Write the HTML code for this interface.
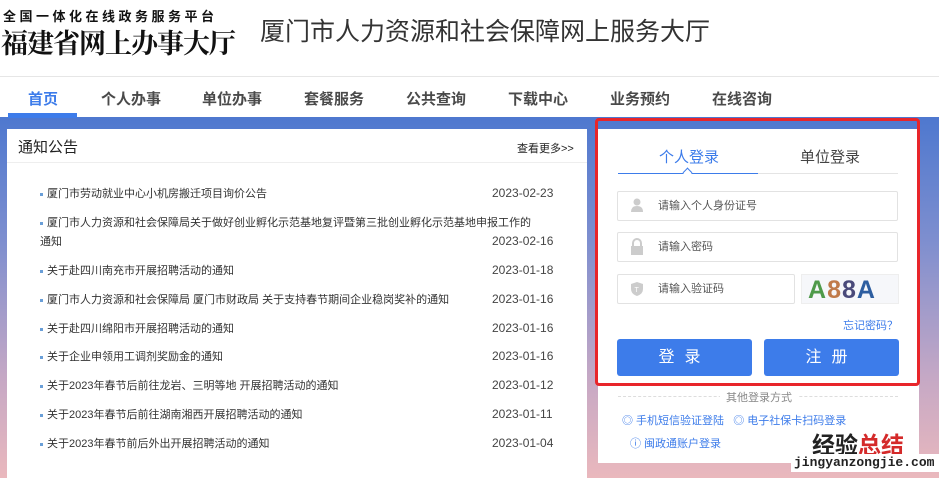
<!DOCTYPE html>
<html><head><meta charset="utf-8"><style>
*{margin:0;padding:0;box-sizing:border-box}
body{width:939px;height:478px;overflow:hidden;background:#fff;font-family:"Liberation Sans","Noto Sans CJK SC",sans-serif;position:relative;color:#333}
.abs{position:absolute}
.bg{left:0;top:117px;width:939px;height:361px;background:linear-gradient(180deg,#4e78cf 0%,#7f8fcf 35%,#c5a8c5 72%,#eab8bd 100%)}
.nav span{position:absolute;top:88px;font-size:15px;font-weight:bold;color:#4a4a4a}
.list div{position:absolute;left:40px;font-size:11px;color:#333;white-space:nowrap;line-height:14px}
.list div b{display:inline-block;width:3px;height:3px;background:#6a9fd8;margin-right:4px;vertical-align:middle}
.list i{position:absolute;left:452px;top:-1px;font-style:normal;font-size:12px;color:#444}
.inp{position:absolute;left:617px;height:30px;border:1px solid #e2e2e2;border-radius:2px;font-size:11px;color:#555;padding-left:40px;line-height:28px;background:#fff}
.btn{position:absolute;top:339px;width:135px;height:37px;background:#3d7cea;border-radius:3px;color:#fff;font-size:16px;text-align:center;line-height:37px;letter-spacing:10px}
</style></head><body>
<div class="abs" style="left:3px;top:6px;font-size:13px;font-weight:bold;letter-spacing:3.5px;color:#111">全国一体化在线政务服务平台</div>
<div class="abs" style="left:1px;top:22px;font-family:'Noto Serif CJK SC',serif;font-size:27px;font-weight:bold;color:#111;letter-spacing:-1px">福建省网上办事大厅</div>
<div class="abs" style="left:260px;top:12px;font-size:25px;color:#333">厦门市人力资源和社会保障网上服务大厅</div>
<div class="abs" style="left:0;top:76px;width:939px;height:1px;background:#e6e6e6"></div>
<div class="nav">
<span style="left:28px;color:#3d7cea">首页</span><span style="left:101px">个人办事</span><span style="left:202px">单位办事</span><span style="left:304px">套餐服务</span><span style="left:406px">公共查询</span><span style="left:508px">下载中心</span><span style="left:610px">业务预约</span><span style="left:712px">在线咨询</span>
</div>
<div class="bg abs"></div>
<div class="abs" style="left:8px;top:113px;width:69px;height:5px;background:#3d7cea"></div>
<div class="abs" style="left:7px;top:129px;width:580px;height:349px;background:#fff"></div>
<div class="abs" style="left:7px;top:162px;width:580px;height:1px;background:#eee"></div>
<div class="abs" style="left:18px;top:136px;font-size:15px;color:#222">通知公告</div>
<div class="abs" style="left:517px;top:140px;font-size:11px;color:#222">查看更多&gt;&gt;</div>
<div class="list">
<div style="top:187px"><b></b>厦门市劳动就业中心小机房搬迁项目询价公告<i>2023-02-23</i></div>
<div style="top:216px"><b></b>厦门市人力资源和社会保障局关于做好创业孵化示范基地复评暨第三批创业孵化示范基地申报工作的</div>
<div style="top:235px">通知<i>2023-02-16</i></div>
<div style="top:264px"><b></b>关于赴四川南充市开展招聘活动的通知<i>2023-01-18</i></div>
<div style="top:293px"><b></b>厦门市人力资源和社会保障局 厦门市财政局 关于支持春节期间企业稳岗奖补的通知<i>2023-01-16</i></div>
<div style="top:322px"><b></b>关于赴四川绵阳市开展招聘活动的通知<i>2023-01-16</i></div>
<div style="top:350px"><b></b>关于企业申领用工调剂奖励金的通知<i>2023-01-16</i></div>
<div style="top:379px"><b></b>关于2023年春节后前往龙岩、三明等地 开展招聘活动的通知<i>2023-01-12</i></div>
<div style="top:408px"><b></b>关于2023年春节后前往湖南湘西开展招聘活动的通知<i>2023-01-11</i></div>
<div style="top:437px"><b></b>关于2023年春节前后外出开展招聘活动的通知<i>2023-01-04</i></div>
</div>
<div class="abs" style="left:598px;top:129px;width:321px;height:334px;background:#fff"></div>
<div class="abs" style="left:595px;top:118px;width:325px;height:268px;border:3px solid #e8252a;border-radius:4px"></div>
<div class="abs" style="left:659px;top:146px;font-size:15px;color:#3d7cea">个人登录</div>
<div class="abs" style="left:800px;top:146px;font-size:15px;color:#444">单位登录</div>
<div class="abs" style="left:618px;top:173px;width:280px;height:1px;background:#e4e4e4"></div>
<div class="abs" style="left:618px;top:173px;width:140px;height:1px;background:#3d7cea"></div>
<div class="abs" style="left:684px;top:169px;width:7px;height:7px;border-left:1px solid #3d7cea;border-top:1px solid #3d7cea;transform:rotate(45deg);background:#fff"></div>
<div class="inp" style="top:191px;width:281px">请输入个人身份证号</div>
<div class="inp" style="top:232px;width:281px">请输入密码</div>
<div class="inp" style="top:274px;width:178px">请输入验证码</div>
<svg class="abs" style="left:629px;top:197px" width="16" height="16"><circle cx="8" cy="5" r="3.5" fill="#ccc"/><path d="M2 15q0-6 6-6t6 6z" fill="#ccc"/></svg>
<svg class="abs" style="left:629px;top:238px" width="16" height="18"><path d="M4 8V5a4 4 0 0 1 8 0v3" stroke="#ccc" stroke-width="2" fill="none"/><rect x="2" y="8" width="12" height="9" fill="#ccc"/></svg>
<svg class="abs" style="left:629px;top:281px" width="16" height="16"><path d="M8 1l6 2v5q0 5-6 7-6-2-6-7V3z" fill="#ccc"/><text x="5.5" y="11" font-size="7" fill="#fff">T</text></svg>
<div class="abs" style="left:801px;top:274px;width:98px;height:30px;background:#f6f7fa;border:1px solid #eee;font-size:25px;font-weight:bold;line-height:30px;padding-left:6px;letter-spacing:1px"><span style="color:#4f9a4a">A</span><span style="color:#c07a4a">8</span><span style="color:#4a4a7a">8</span><span style="color:#2e5ea0">A</span></div>
<div class="abs" style="left:843px;top:317px;font-size:11px;color:#3d7cea">忘记密码？</div>
<div class="btn" style="left:617px">登录</div>
<div class="btn" style="left:764px">注册</div>
<div class="abs" style="left:618px;top:396px;width:280px;border-top:1px dashed #ddd"></div>
<div class="abs" style="left:720px;top:389px;padding:0 6px;background:#fff;font-size:11px;color:#888">其他登录方式</div>
<div class="abs" style="left:622px;top:412px;font-size:11px;color:#3d7cea">◎ 手机短信验证登陆 &nbsp; ◎ 电子社保卡扫码登录</div>
<div class="abs" style="left:630px;top:435px;font-size:11px;color:#3d7cea">ⓘ 闽政通账户登录</div>
<div class="abs" style="left:812px;top:426px;font-size:23px;font-weight:bold;color:#222">经验<span style="color:#d42a2a">总结</span></div>
<div class="abs" style="left:791px;top:454px;width:148px;height:18px;background:#fff;font-family:'Liberation Mono',monospace;font-size:13px;font-weight:bold;color:#222;padding-left:3px;line-height:18px">jingyanzongjie.com</div>
</body></html>
